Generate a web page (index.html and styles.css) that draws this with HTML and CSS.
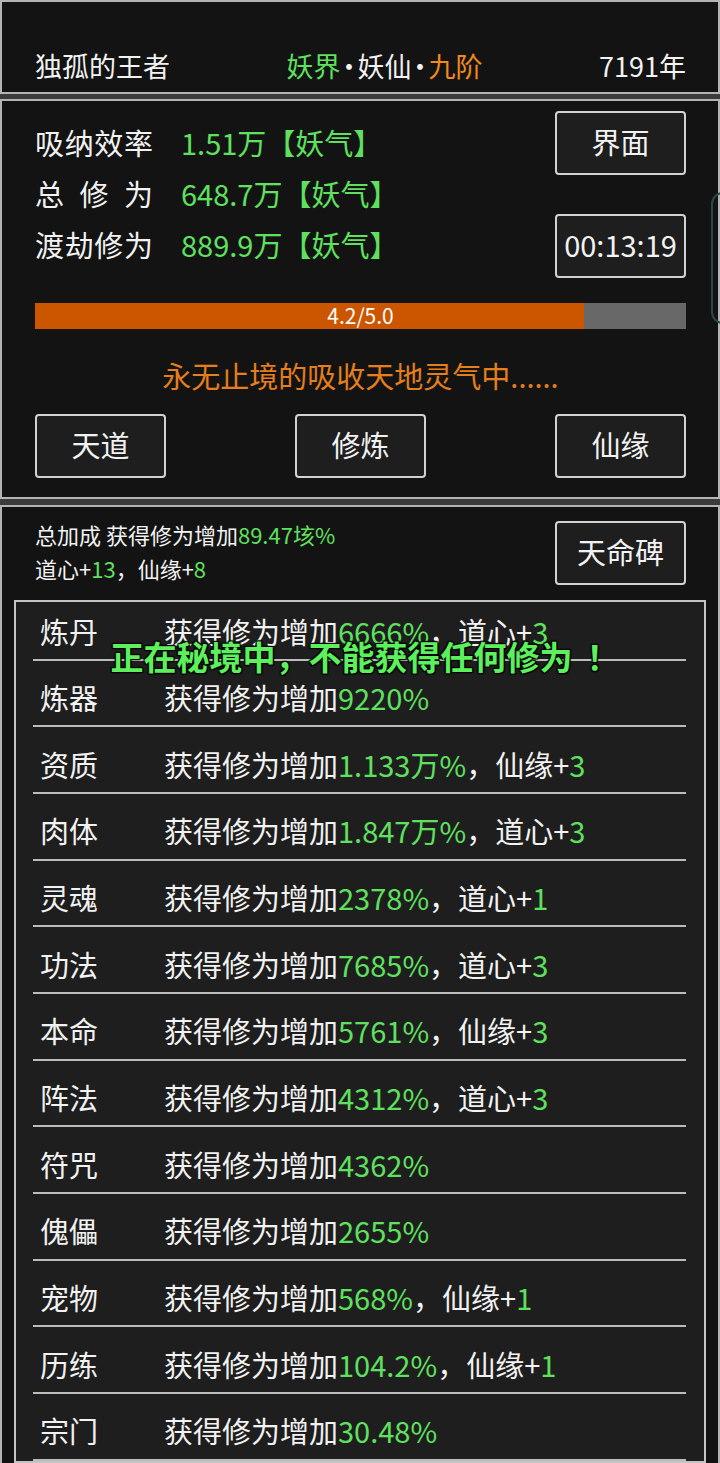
FILE: index.html
```html
<!DOCTYPE html>
<html lang="zh-CN">
<head>
  <meta charset="UTF-8" />
  <meta name="viewport" content="width=device-width, initial-scale=1.0"/>
  <title>修仙</title>
  <link rel="stylesheet" href="styles.css">
</head>
<body>
<div class="screen">

  <header class="topbar">
    <span>独孤的王者</span>
    <span><span class="green">妖界</span><span class="dot">·</span>妖仙<span class="dot">·</span><span class="orange">九阶</span></span>
    <span>7191年</span>
  </header>

  <section class="panel cultivate">
    <div class="top">
      <div class="stats">
        <div class="stat"><span class="label">吸纳效率</span><span class="green">1.51万【妖气】</span></div>
        <div class="stat"><span class="label">总修为</span><span class="green">648.7万【妖气】</span></div>
        <div class="stat"><span class="label">渡劫修为</span><span class="green">889.9万【妖气】</span></div>
      </div>
      <div class="side">
        <button class="btn">界面</button>
        <button class="btn">00:13:19</button>
      </div>
    </div>

    <div class="bar">
      <div class="fill" style="width: 84.4%"></div>
      <span class="bar-text">4.2/5.0</span>
    </div>

    <p class="status">永无止境的吸收天地灵气中......</p>

    <div class="actions">
      <button class="btn">天道</button>
      <button class="btn">修炼</button>
      <button class="btn">仙缘</button>
    </div>
  </section>

  <section class="panel bonus">
    <div class="bonus-head">
      <div class="summary">
        <div>总加成 获得修为增加<span class="green">89.47垓%</span></div>
        <div>道心+<span class="green">13</span>，仙缘+<span class="green">8</span></div>
      </div>
      <button class="btn">天命碑</button>
    </div>

    <ul class="list">
      <li><span class="name">炼丹</span>获得修为增加<span class="green">6666%</span>，道心+<span class="green">3</span></li>
      <li><span class="name">炼器</span>获得修为增加<span class="green">9220%</span></li>
      <li><span class="name">资质</span>获得修为增加<span class="green">1.133万%</span>，仙缘+<span class="green">3</span></li>
      <li><span class="name">肉体</span>获得修为增加<span class="green">1.847万%</span>，道心+<span class="green">3</span></li>
      <li><span class="name">灵魂</span>获得修为增加<span class="green">2378%</span>，道心+<span class="green">1</span></li>
      <li><span class="name">功法</span>获得修为增加<span class="green">7685%</span>，道心+<span class="green">3</span></li>
      <li><span class="name">本命</span>获得修为增加<span class="green">5761%</span>，仙缘+<span class="green">3</span></li>
      <li><span class="name">阵法</span>获得修为增加<span class="green">4312%</span>，道心+<span class="green">3</span></li>
      <li><span class="name">符咒</span>获得修为增加<span class="green">4362%</span></li>
      <li><span class="name">傀儡</span>获得修为增加<span class="green">2655%</span></li>
      <li><span class="name">宠物</span>获得修为增加<span class="green">568%</span>，仙缘+<span class="green">1</span></li>
      <li><span class="name">历练</span>获得修为增加<span class="green">104.2%</span>，仙缘+<span class="green">1</span></li>
      <li><span class="name">宗门</span>获得修为增加<span class="green">30.48%</span></li>
    </ul>

    <div class="toast">正在秘境中，不能获得任何修为<span class="bang">！</span></div>
  </section>

  <div class="edge-tab"></div>
</div>
</body>
</html>
```

FILE: styles.css
```css
body {
  margin: 0;
  background: #3b3b3b;
  font-family: "Noto Sans CJK SC", "Noto Sans", sans-serif;
  color: #f2f2f2;
}
.screen {
  position: relative;
  width: 720px;
  height: 1463px;
  overflow: hidden;
}
.green {
  color: #5fe15f;
}
.orange {
  color: #f08a1c;
}

/* top bar: name, realm, age */
.topbar {
  box-sizing: border-box;
  height: 94px;
  border: 2px solid #b4b4b4;
  background: #131313;
  display: flex;
  justify-content: space-between;
  align-items: flex-end;
  padding: 0 32px 8px 33px;
  font-size: 27px;
  line-height: 36px;
}
.dot {
  margin: 0 -5px;
}

.panel {
  box-sizing: border-box;
  border: 2px solid #b4b4b4;
  background: #131313;
}
.cultivate {
  margin-top: 5px;
  height: 400px;
  padding: 10px 32px 0 33px;
}
.top {
  display: flex;
  justify-content: space-between;
}
.stats {
  margin-top: 6px;
  font-size: 29px;
}
.stat {
  display: flex;
  line-height: 51px;
}
.label {
  width: 118px;
  margin-right: 28px;
  text-align: justify;
  text-align-last: justify;
}
.side {
  display: flex;
  flex-direction: column;
  gap: 39px;
}

.btn {
  box-sizing: border-box;
  width: 131px;
  height: 64px;
  padding: 0 0 5px;
  border: 2px solid #d2d2d2;
  border-radius: 4px;
  background: #1e1e1e;
  color: #f2f2f2;
  font-family: inherit;
  font-size: 29px;
}

.bar {
  position: relative;
  margin-top: 25px;
  height: 26px;
  background: #686868;
}
.fill {
  height: 100%;
  background: #cc5500;
}
.bar-text {
  position: absolute;
  inset: 0;
  text-align: center;
  font-size: 21px;
  line-height: 25px;
  color: #fff;
}

.status {
  margin: 29px 0 0;
  text-align: center;
  font-size: 29px;
  line-height: 34px;
  color: #e57f1c;
}
.actions {
  margin-top: 22px;
  display: flex;
  justify-content: space-between;
}

/* bonus panel with the list of sources */
.bonus {
  position: relative;
  margin-top: 6px;
  height: 1000px;
  padding: 0 12px;
}
.bonus-head {
  display: flex;
  justify-content: space-between;
  padding: 14px 20px 0 21px;
}
.summary {
  margin-top: -4px;
  font-size: 22px;
  line-height: 34px;
}
.list {
  list-style: none;
  margin: 15px 0 0;
  padding: 0;
  border: 2px solid #c4c4c4;
  background: #1e1e1e;
  font-size: 29px;
  line-height: 36px;
}
.list li {
  display: flex;
  margin: 0 18px 0 17px;
  padding: 18.5px 0 10.17px 7px;
  border-bottom: 2px solid #bcbcbc;
}
.list li:first-child {
  padding-top: 10.5px;
}
.name {
  width: 124px;
}

.toast {
  position: absolute;
  top: 129px;
  left: 10px;
  right: 0;
  text-align: center;
  font-size: 33px;
  line-height: 40px;
  font-weight: bold;
  color: #5cf05c;
  text-shadow: 0 0 2px #000, 1px 1px 1px #000, -1px -1px 1px #000, 1px -1px 1px #000, -1px 1px 1px #000;
}
.bang {
  margin-left: 14px;
}

.edge-tab {
  position: absolute;
  left: 711px;
  top: 192px;
  width: 30px;
  height: 128px;
  border: 2px solid #2b4a44;
  border-radius: 12px;
}
```
